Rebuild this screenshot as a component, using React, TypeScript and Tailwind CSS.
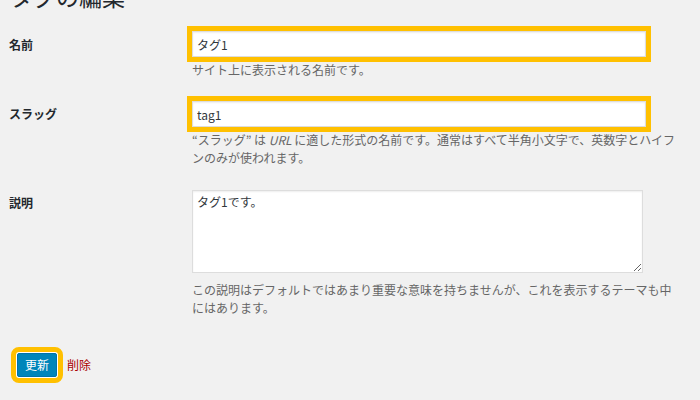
import React from "react";

const font = "font-['Noto_Sans_CJK_JP','Noto_Sans',sans-serif]";

const hintClass = "text-[12px] leading-[18px] text-[#666] whitespace-nowrap";
const labelClass = "w-[183px] shrink-0 text-[12px] leading-[18px] font-bold text-[#23282d]";
const inputClass =
  "block w-[454px] h-[26px] bg-white border border-[#ddd] shadow-[inset_0_1px_2px_rgba(0,0,0,0.07)] px-[4px] text-[12px] text-[#32373c] outline-[5px] outline-solid outline-[#ffc000]";

const FieldRow = ({
  label,
  labelTop,
  className,
  children,
}: {
  label: string;
  labelTop: string;
  className: string;
  children: React.ReactNode;
}) => (
  <div className={`flex ${className}`}>
    <div className={`${labelClass} ${labelTop}`}>{label}</div>
    <div className="w-[478px]">{children}</div>
  </div>
);

export default function App() {
  return (
    <div className={`min-h-[400px] w-[700px] overflow-hidden bg-[#f1f1f1] pl-[9px] ${font}`}>
      <h1 className="mt-[-15px] ml-[1px] text-[23px] leading-[23px] font-normal text-[#23282d]">
        タグの編集
      </h1>

      <FieldRow label="名前" labelTop="pt-[5px]" className="mt-[23px]">
        <input className={inputClass} defaultValue="タグ1" readOnly />
        <p className={`${hintClass} mt-[4px]`}>サイト上に表示される名前です。</p>
      </FieldRow>

      <FieldRow label="スラッグ" labelTop="pt-[4px]" className="mt-[22px]">
        <input className={inputClass} defaultValue="tag1" readOnly />
        <p className={`${hintClass} mt-[4px]`}>
          “スラッグ” は <i>URL</i> に適した形式の名前です。通常はすべて半角小文字で、英数字とハイフ
          <br />
          ンのみが使われます。
        </p>
      </FieldRow>

      <FieldRow label="説明" labelTop="pt-[4px]" className="mt-[23px]">
        <textarea
          className="block w-[451px] h-[83px] bg-white border border-[#ddd] shadow-[inset_0_1px_2px_rgba(0,0,0,0.07)] px-[4px] py-[2px] text-[12px] leading-[18px] text-[#32373c]"
          defaultValue="タグ1です。"
          readOnly
        />
        <p className={`${hintClass} mt-[8px]`}>
          この説明はデフォルトではあまり重要な意味を持ちませんが、これを表示するテーマも中
          <br />
          にはあります。
        </p>
      </FieldRow>

      <div className="mt-[36px] flex items-center">
        <button className="ml-[8px] h-[24px] w-[40px] rounded-[2px] border border-[#0073aa] bg-[#0085ba] text-[12px] leading-[22px] text-white ring-1 ring-white outline-[5px] outline-solid outline-offset-1 outline-[#ffc000]">
          更新
        </button>
        <a className="ml-[10px] text-[12px] leading-[18px] text-[#a00]">削除</a>
      </div>
    </div>
  );
}
